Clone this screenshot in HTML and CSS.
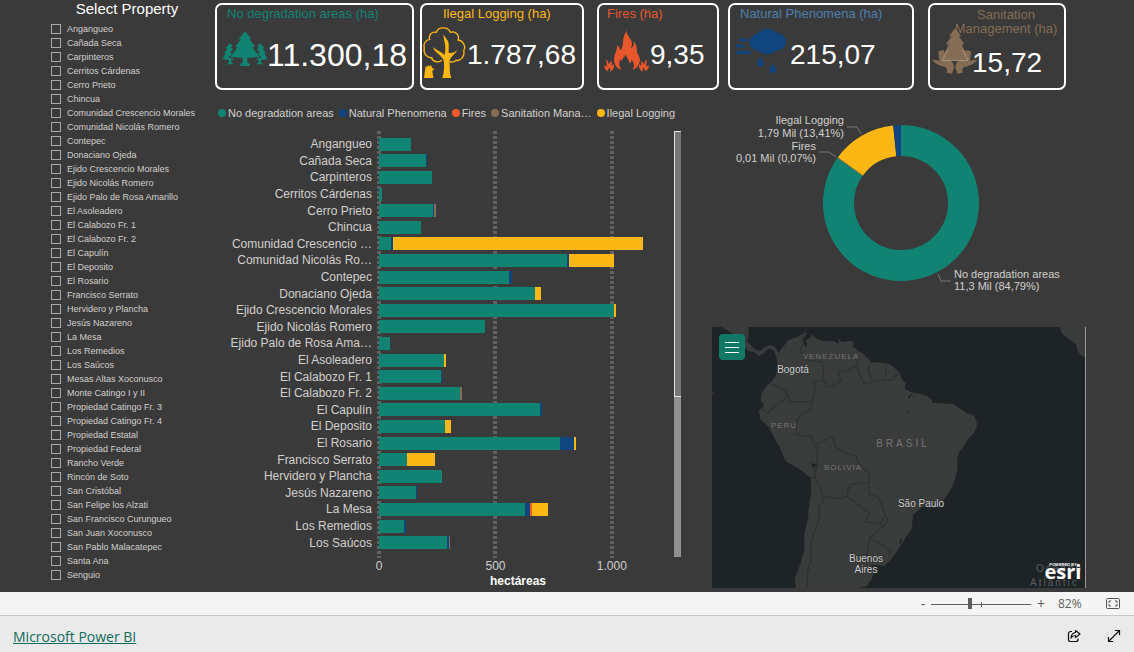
FILE: index.html
```html
<!DOCTYPE html>
<html lang="es">
<head>
<meta charset="utf-8">
<title>Microsoft Power BI</title>
<link rel="stylesheet" href="styles.css">
</head>
<body>
<main class="report">
  <fieldset class="slicer">
    <legend class="slicer-title">Select Property</legend>
    <label class="option"><input type="checkbox">Angangueo</label>
    <label class="option"><input type="checkbox">Cañada Seca</label>
    <label class="option"><input type="checkbox">Carpinteros</label>
    <label class="option"><input type="checkbox">Cerritos Cárdenas</label>
    <label class="option"><input type="checkbox">Cerro Prieto</label>
    <label class="option"><input type="checkbox">Chincua</label>
    <label class="option"><input type="checkbox">Comunidad Crescencio Morales</label>
    <label class="option"><input type="checkbox">Comunidad Nicolás Romero</label>
    <label class="option"><input type="checkbox">Contepec</label>
    <label class="option"><input type="checkbox">Donaciano Ojeda</label>
    <label class="option"><input type="checkbox">Ejido Crescencio Morales</label>
    <label class="option"><input type="checkbox">Ejido Nicolás Romero</label>
    <label class="option"><input type="checkbox">Ejido Palo de Rosa Amarillo</label>
    <label class="option"><input type="checkbox">El Asoleadero</label>
    <label class="option"><input type="checkbox">El Calabozo Fr. 1</label>
    <label class="option"><input type="checkbox">El Calabozo Fr. 2</label>
    <label class="option"><input type="checkbox">El Capulín</label>
    <label class="option"><input type="checkbox">El Deposito</label>
    <label class="option"><input type="checkbox">El Rosario</label>
    <label class="option"><input type="checkbox">Francisco Serrato</label>
    <label class="option"><input type="checkbox">Hervidero y Plancha</label>
    <label class="option"><input type="checkbox">Jesús Nazareno</label>
    <label class="option"><input type="checkbox">La Mesa</label>
    <label class="option"><input type="checkbox">Los Remedios</label>
    <label class="option"><input type="checkbox">Los Saúcos</label>
    <label class="option"><input type="checkbox">Mesas Altas Xoconusco</label>
    <label class="option"><input type="checkbox">Monte Catingo I y II</label>
    <label class="option"><input type="checkbox">Propiedad Catingo Fr. 3</label>
    <label class="option"><input type="checkbox">Propiedad Catingo Fr. 4</label>
    <label class="option"><input type="checkbox">Propiedad Estatal</label>
    <label class="option"><input type="checkbox">Propiedad Federal</label>
    <label class="option"><input type="checkbox">Rancho Verde</label>
    <label class="option"><input type="checkbox">Rincón de Soto</label>
    <label class="option"><input type="checkbox">San Cristóbal</label>
    <label class="option"><input type="checkbox">San Felipe los Alzati</label>
    <label class="option"><input type="checkbox">San Francisco Curungueo</label>
    <label class="option"><input type="checkbox">San Juan Xoconusco</label>
    <label class="option"><input type="checkbox">San Pablo Malacatepec</label>
    <label class="option"><input type="checkbox">Santa Ana</label>
    <label class="option"><input type="checkbox">Senguio</label>
  </fieldset>

  <div class="board">
    <section class="cards">
      <article class="card card-areas">
        <h2 class="card-title">No degradation areas (ha)</h2>
        <div class="card-body">
          <svg class="card-icon" width="46" height="36" viewBox="36 92 138 108" aria-hidden="true">
            <g fill="#118373">
              <path d="M105 93L125 116L118 117L136 139L127 141L149 170L112 172V186Q120 189 121 197H90Q91 189 98 186V172L61 170L83 141L75 139L93 117L86 116Z"/>
              <path id="sideTree" d="M60 128L68 138L62 142L70 146L60 157L68 160L55 171L73 177L64 180V186L72 192H50L57 186V179L37 177L47 160L42 158L52 145L47 143Z"/>
              <use href="#sideTree" transform="translate(210 0) scale(-1 1)"/>
            </g>
          </svg>
          <span class="card-value">11.300,18</span>
        </div>
      </article>
      <article class="card card-logging">
        <h2 class="card-title">Ilegal Logging (ha)</h2>
        <div class="card-body">
          <svg class="card-icon" width="43" height="53" viewBox="23 78 129 159" aria-hidden="true">
            <path fill="none" stroke="#fdb714" stroke-width="4" d="M80 181C68 190 50 184 49 173C34 173 23 160 27 144C23 130 32 119 43 118C39 104 50 94 63 97C68 80 98 78 105 97C121 92 134 106 128 120C146 123 152 142 145 152C150 170 134 184 122 181C116 187 109 187 104 184"/>
            <path fill="#fdb714" d="M81 234H108Q103 222 103 200V182C104 172 118 164 126 150C118 158 108 160 100 158V130C98 118 88 112 84 102C84 118 91 130 90 146L88 166C78 154 64 152 53 141C58 158 76 164 84 178C88 192 87 216 81 234Z"/>
            <path fill="#fdb714" d="M26 234L31 198L35 202L39 194L43 200L47 194L50 203L57 207L51 213L54 234Z"/>
          </svg>
          <span class="card-value">1.787,68</span>
        </div>
      </article>
      <article class="card card-fires">
        <h2 class="card-title">Fires (ha)</h2>
        <div class="card-body">
          <svg class="card-icon" width="45" height="43" viewBox="568 86 134 128" aria-hidden="true">
            <g fill="#e8562c">
              <path d="M636 87C632 100 642 108 648 118C654 130 651 136 648 144C655 140 658 132 657 123C668 134 664 148 668 160C673 168 677 176 674 184C671 196 664 204 653 208C660 196 657 186 650 177C650 184 648 187 644 189C645 178 634 172 633 161C631 170 622 168 622 182L617 176C610 190 615 200 621 208C606 204 597 190 598 176C598 160 607 152 607 134C613 138 616 144 617 150C627 136 623 124 627 110C629 100 634 96 636 87Z"/>
              <path id="spark" d="M573 177C579 180 582 184 581 191C585 187 589 184 589 179C593 186 590 190 592 195L598 190C599 202 594 211 586 213C589 208 587 204 583 201C583 206 578 206 579 212C571 208 568 200 569 194L576 198C577 190 576 184 573 177Z"/>
              <use href="#spark" transform="translate(1270 0) scale(-1 1)"/>
            </g>
          </svg>
          <span class="card-value">9,35</span>
        </div>
      </article>
      <article class="card card-natural">
        <h2 class="card-title">Natural Phenomena (ha)</h2>
        <div class="card-body">
          <svg class="card-icon" width="51" height="45" viewBox="46 83 152 133" aria-hidden="true">
            <g fill="#10457e">
              <circle cx="111" cy="126" r="23"/><ellipse cx="142" cy="110" rx="30" ry="25"/><circle cx="173" cy="124" r="25"/><ellipse cx="142" cy="123" rx="47" ry="33"/><ellipse cx="142" cy="136" rx="32" ry="25"/>
              <path d="M122 169Q132 183 132 189A10 9 0 0 1 112 189Q112 183 122 169ZM159 190Q169 202 169 207A10 9 0 0 1 149 207Q149 202 159 190Z"/>
            </g>
            <path fill="none" stroke="#10457e" stroke-width="9" stroke-linecap="round" d="M62 118H79M52 136H71M52 155H91"/>
          </svg>
          <span class="card-value">215,07</span>
        </div>
      </article>
      <article class="card card-sanitation">
        <h2 class="card-title">Sanitation<br>Management (ha)</h2>
        <div class="card-body">
          <svg class="card-icon" width="45" height="47" viewBox="636 84 136 142" aria-hidden="true">
            <g fill="#846d54">
              <path d="M706 84L724 108L717 110L734 132L726 134L748 182H712V190H700V182H664L686 134L678 132L695 110L688 108Z"/>
              <path id="hand" d="M636 181Q645 178 658 184L655 156Q656 151 660 155Q662 148 666 153Q669 148 673 153L678 178L694 184Q704 192 702 204L696 222L680 219Q684 206 676 202Q652 198 636 181Z"/>
              <use href="#hand" transform="translate(1409 0) scale(-1 1)"/>
            </g>
            <path fill="#3a3a3a" d="M698 184H712L705 198Z"/>
            <path fill="none" stroke="#b5aca0" stroke-width="2" d="M684 150L667 182H745L728 150"/>
          </svg>
          <span class="card-value">15,72</span>
        </div>
      </article>
    </section>

    <div class="visuals">
      <section class="chart">
        <ul class="legend">
          <li><i class="dot areas"></i>No degradation areas</li>
          <li><i class="dot natural"></i>Natural Phenomena</li>
          <li><i class="dot fires"></i>Fires</li>
          <li><i class="dot sanitation"></i>Sanitation Mana…</li>
          <li><i class="dot logging"></i>Ilegal Logging</li>
        </ul>
        <div class="chart-area">
          <ol class="names">
            <li>Angangueo</li><li>Cañada Seca</li><li>Carpinteros</li><li>Cerritos Cárdenas</li><li>Cerro Prieto</li>
            <li>Chincua</li><li>Comunidad Crescencio …</li><li>Comunidad Nicolás Ro…</li><li>Contepec</li><li>Donaciano Ojeda</li>
            <li>Ejido Crescencio Morales</li><li>Ejido Nicolás Romero</li><li>Ejido Palo de Rosa Ama…</li><li>El Asoleadero</li><li>El Calabozo Fr. 1</li>
            <li>El Calabozo Fr. 2</li><li>El Capulín</li><li>El Deposito</li><li>El Rosario</li><li>Francisco Serrato</li>
            <li>Hervidero y Plancha</li><li>Jesús Nazareno</li><li>La Mesa</li><li>Los Remedios</li><li>Los Saúcos</li>
          </ol>
          <div class="plot">
            <div class="gridlines"><i></i><i></i><i></i></div>
            <div class="bar"><i class="areas" style="width:10.9%"></i></div>
            <div class="bar"><i class="areas" style="width:16%"></i><i class="natural" style="width:.3%"></i></div>
            <div class="bar"><i class="areas" style="width:18.2%"></i></div>
            <div class="bar"><i class="areas" style="width:1.1%"></i></div>
            <div class="bar"><i class="areas" style="width:18.4%"></i><i class="natural" style="width:.5%"></i><i class="sanitation" style="width:.6%"></i></div>
            <div class="bar"><i class="areas" style="width:14.6%"></i></div>
            <div class="bar"><i class="areas" style="width:4.2%"></i><i class="natural" style="width:.6%"></i><i class="logging" style="width:85.9%"></i></div>
            <div class="bar"><i class="areas" style="width:64.5%"></i><i class="natural" style="width:.7%"></i><i class="logging" style="width:15.4%"></i></div>
            <div class="bar"><i class="areas" style="width:44.7%"></i><i class="natural" style="width:1.1%"></i></div>
            <div class="bar"><i class="areas" style="width:53.6%"></i><i class="logging" style="width:2.2%"></i></div>
            <div class="bar"><i class="areas" style="width:80.7%"></i><i class="logging" style="width:.7%"></i></div>
            <div class="bar"><i class="areas" style="width:36.4%"></i></div>
            <div class="bar"><i class="areas" style="width:3.9%"></i></div>
            <div class="bar"><i class="areas" style="width:22.3%"></i><i class="logging" style="width:.8%"></i></div>
            <div class="bar"><i class="areas" style="width:21.2%"></i><i class="natural" style="width:.4%"></i></div>
            <div class="bar"><i class="areas" style="width:28%"></i><i class="sanitation" style="width:.4%"></i></div>
            <div class="bar"><i class="areas" style="width:55.3%"></i><i class="natural" style="width:.8%"></i></div>
            <div class="bar"><i class="areas" style="width:22.8%"></i><i class="logging" style="width:2.1%"></i></div>
            <div class="bar"><i class="areas" style="width:62.2%"></i><i class="natural" style="width:4.8%"></i><i class="logging" style="width:.6%"></i></div>
            <div class="bar"><i class="areas" style="width:9.5%"></i><i class="logging" style="width:9.8%"></i></div>
            <div class="bar"><i class="areas" style="width:21.6%"></i></div>
            <div class="bar"><i class="areas" style="width:12.8%"></i><i class="natural" style="width:.4%"></i></div>
            <div class="bar"><i class="areas" style="width:50.3%"></i><i class="natural" style="width:1.6%"></i><i class="fires" style="width:.6%"></i><i class="logging" style="width:5.6%"></i></div>
            <div class="bar"><i class="areas" style="width:8.6%"></i><i class="natural" style="width:.8%"></i></div>
            <div class="bar"><i class="areas" style="width:23.4%"></i><i class="natural" style="width:.6%"></i><i class="sanitation" style="width:.3%"></i></div>
          </div>
          <div class="scroll"><div class="scroll-thumb"></div></div>
          <div class="ticks"><span>0</span><span>500</span><span>1.000</span></div>
          <div class="axis-title">hectáreas</div>
        </div>
      </section>

      <div class="side">
        <svg class="donut" viewBox="0 0 374 224" role="img" aria-label="Donut">
          <g fill="none" stroke-width="31" transform="rotate(-90 189 113)">
            <circle cx="189" cy="113" r="62.5" pathLength="100" stroke="#118373" stroke-dasharray="84.8 100"/>
            <circle cx="189" cy="113" r="62.5" pathLength="100" stroke="#846d54" stroke-dasharray=".2 100" stroke-dashoffset="-84.79"/>
            <circle cx="189" cy="113" r="62.5" pathLength="100" stroke="#fdb714" stroke-dasharray="13.42 100" stroke-dashoffset="-84.97"/>
            <circle cx="189" cy="113" r="62.5" pathLength="100" stroke="#10457e" stroke-dasharray="1.61 100" stroke-dashoffset="-98.39"/>
          </g>
          <path fill="none" stroke="#777" d="M135 37H145L149 44M107 62H117L124 67M226 184L229 191H239"/>
          <g class="donut-label">
            <text x="132" y="34" text-anchor="end">Ilegal Logging</text>
            <text x="132" y="47" text-anchor="end">1,79 Mil (13,41%)</text>
            <text x="104" y="60" text-anchor="end">Fires</text>
            <text x="104" y="72" text-anchor="end">0,01 Mil (0,07%)</text>
            <text x="242" y="188">No degradation areas</text>
            <text x="242" y="200">11,3 Mil (84,79%)</text>
          </g>
        </svg>
        <div class="map">
          <svg class="map-canvas" viewBox="0 0 373 261" role="img" aria-label="Mapa">
            <g transform="scale(.33333) translate(-21 -21)">
              <path fill="#3a3b3b" d="M50 21H130L131 48L126 64L145 83L160 92L170 90L178 82L197 75L212 83L220 98L238 76L250 60L280 50L302 36L305 42L294 55L296 70L302 82L306 72L301 62L318 50L322 40L326 50L350 62L385 64L400 70L402 58L410 66L440 62L448 72L440 76L460 92L480 106L498 127L540 128L560 136L582 156L590 176L602 190L600 206L614 214L626 218L640 220L665 228L680 238V248L745 252L785 280L806 286L815 305V320L808 338L785 362L775 382L762 397L758 410L757 450L746 490L730 520L712 544L650 562L624 585L620 626L600 655L585 680L560 716L538 738L500 735L478 728L498 736L510 750L500 778L486 798L455 806H273L269 776L285 735L298 690V640L308 600L312 560L319 515L317 475L290 452L240 422L232 400L215 366L190 320L166 298L162 272L177 256L167 240L170 220L182 200L200 184L214 165L217 130L213 106L206 90L190 86L176 100L162 108L148 97L128 92L114 74L100 48L80 38Z"/>
              <path fill="#3a3b3b" d="M1066 21H1140V112L1128 106L1116 90L1114 72L1096 60L1080 48L1068 38ZM21 216L28 220L24 224Z"/>
              <path fill="#1e2326" d="M602 268L612 278L606 277ZM584 660L592 656L586 674ZM318 430L330 432L341 440L328 440L324 444ZM626 218L612 236L610 228Z"/>
              <path fill="none" stroke="#2f3233" stroke-width="4" stroke-linejoin="round" d="M296 70L286 92L300 120L350 126L356 150L355 182L325 188L330 210L322 245L312 246L258 244L240 212L200 192M240 212L246 228L230 246L208 256L190 280L176 270M322 245L318 268L286 284L274 306L274 342L300 350L318 346L322 366L338 372L383 350L390 380L420 398L455 410L460 430L486 456L495 470L490 488L440 492L428 510L426 530L404 536L362 530L356 540L344 500L330 474L336 430L338 372M322 366L338 396L334 440L328 472L317 475M356 182L366 200L390 196L408 180L398 154L430 150L456 136L462 108M456 136L470 180L480 192L520 182L565 180L582 156M498 127L488 150L500 176M540 128L544 150L540 178M490 488L492 525L520 530L530 556L540 584L528 612L480 606L494 580L428 530M540 584L550 602L520 632L494 656L486 700L490 730M494 656L530 672L556 695L550 712M356 540L342 560L344 590L326 640L316 680L318 720L306 760L308 806"/>
            </g>
            <g class="country" fill="#737575">
              <text x="119" y="32" text-anchor="middle">VENEZUELA</text>
              <text x="72" y="101" text-anchor="middle">PERÚ</text>
              <text x="131" y="143" text-anchor="middle">BOLIVIA</text>
              <text class="wide" x="191" y="120" text-anchor="middle">BRASIL</text>
              <text class="ocean" x="324" y="245">Océano</text>
              <text class="ocean" x="318" y="259">Atlántic</text>
            </g>
            <g class="city">
              <text x="81" y="46" text-anchor="middle">Bogotá</text>
              <text x="209" y="180" text-anchor="middle">São Paulo</text>
              <text x="154" y="235" text-anchor="middle">Buenos</text>
              <text x="154" y="246" text-anchor="middle">Aires</text>
            </g>
            <text class="esri-small" x="351" y="239" text-anchor="middle">POWERED BY</text>
            <text class="esri" x="351" y="252" text-anchor="middle">esri</text>
          </svg>
          <button class="map-menu" aria-label="Menú"><span></span><span></span><span></span></button>
        </div>
      </div>
    </div>
  </div>
</main>

<div class="zoombar">
  <button class="zoom-step" aria-label="Alejar">-</button>
  <input class="zoom-range" type="range" min="0" max="100" value="39" aria-label="Zoom">
  <button class="zoom-step" aria-label="Acercar">+</button>
  <span class="zoom-value">82%</span>
  <button class="icon-button" aria-label="Ajustar a la página">
    <svg width="14" height="11" viewBox="0 0 14 11" fill="none" stroke="#555"><rect x=".5" y=".5" width="13" height="10" rx="1"/><path d="M3 5V3H5M9 3H11V5M11 6V8H9M5 8H3V6"/></svg>
  </button>
</div>
<footer class="footer">
  <a class="brand" href="#">Microsoft Power BI</a>
  <button class="icon-button" aria-label="Compartir">
    <svg width="14" height="14" viewBox="0 0 14 14" fill="none" stroke="#111" stroke-width="1.200" stroke-linejoin="round"><path d="M5 2.500H3.500A2 2 0 0 0 1.500 4.500V10.500A2 2 0 0 0 3.500 12.500H9A2 2 0 0 0 11 10.500V9.500"/><path d="M8.500 1.500L13 5L8.500 8.500V6.500Q6 6.500 4 9Q4.500 4 8.500 3.500Z"/></svg>
  </button>
  <button class="icon-button" aria-label="Pantalla completa">
    <svg width="14" height="14" viewBox="0 0 14 14" fill="none" stroke="#111" stroke-width="1.200"><path d="M1.500 12.500L12.500 1.500M8 1.500H12.500V6M1.500 8V12.500H6"/></svg>
  </button>
</footer>
</body>
</html>
```
FILE: styles.css
```css
* { box-sizing: border-box; }

body {
  margin: 0;
  background: #eaeaea;
  font-family: "Liberation Sans", Arial, sans-serif;
  color: #d2d0ce;
}

button {
  padding: 0;
  border: 0;
  background: none;
  color: inherit;
  font: inherit;
}

ul, ol { margin: 0; padding: 0; list-style: none; }
svg { display: block; }

.areas { background: #118373; }
.natural { background: #10457e; }
.fires { background: #f1592a; }
.sanitation { background: #846d54; }
.logging { background: #fdb714; }

.report {
  display: grid;
  grid-template-columns: 215px minmax(0, 1fr);
  min-height: 592px;
  background: #3a3a3a;
}

/* Property slicer */
.slicer {
  margin: 0;
  padding: 0 0 0 51px;
  border: 0;
  min-width: 0;
}
.slicer-title {
  width: 152px;
  padding: 0 12px 0 0;
  height: 22px;
  line-height: 18px;
  font-size: 15px;
  text-align: center;
  color: #fff;
}
.option {
  display: flex;
  align-items: center;
  gap: 6px;
  height: 14px;
  font-size: 9px;
  white-space: nowrap;
}
.option input {
  appearance: none;
  width: 10px;
  height: 10px;
  margin: 0;
  border: 1px solid #aaa9a6;
}

/* Cards */
.board { padding: 3px 48px 3px 0; }
.cards {
  display: grid;
  grid-template-columns: 199fr 170fr 135fr 195fr 152fr;
  padding-right: 20px;
}
.card {
  height: 87px;
  border: 2px solid #fff;
  border-radius: 7px;
}
.card-title {
  margin: 0;
  height: 17px;
  line-height: 17px;
  font-size: 13px;
  font-weight: 400;
  white-space: nowrap;
}
.card-body {
  display: flex;
  align-items: center;
  height: 65px;
}
.card-icon { flex: none; margin-bottom: 8px; }
.card-value {
  font-size: 28px;
  line-height: 32px;
  color: #fff;
}
.card-areas .card-title { padding-left: 10px; color: #118373; }
.card-areas .card-body { padding-left: 5px; }
.card-areas .card-icon { margin-bottom: 12px; }
.card-areas .card-value { margin-left: -1px; font-size: 32px; }

.card-logging { margin-left: 6px; }
.card-logging .card-title { padding-left: 21px; color: #fdb714; }
.card-logging .card-body { padding-left: 1px; gap: 1px; }
.card-logging .card-icon { margin-bottom: 4px; }

.card-fires { margin-left: 13px; }
.card-fires .card-title { padding-left: 8px; color: #e8562c; }
.card-fires .card-body { padding-left: 5px; gap: 1px; }

.card-natural { margin-left: 9px; }
.card-natural .card-title { padding-left: 10px; color: #4b7fb0; }
.card-natural .card-body { padding-left: 5px; gap: 4px; }

.card-sanitation { margin-left: 14px; }
.card-sanitation .card-title {
  height: 31px;
  padding: 3px 4px 0 22px;
  line-height: 14px;
  text-align: center;
  color: #846d54;
}
.card-sanitation .card-body { height: 51px; padding-left: 2px; }
.card-sanitation .card-icon { margin: -20px 0 0; }
.card-sanitation .card-value { margin: 3px 0 0 -5px; }

/* Lower area */
.visuals {
  display: grid;
  grid-template-columns: minmax(0, 1fr) 374px;
  gap: 31px;
}
.legend {
  display: flex;
  align-items: center;
  gap: 5px;
  height: 40px;
  padding: 6px 0 0 3px;
  font-size: 11px;
  white-space: nowrap;
}
.legend li { display: flex; align-items: center; gap: 2px; }
.dot { width: 8px; height: 8px; border-radius: 50%; }

.chart-area {
  display: grid;
  grid-template-columns: 157px minmax(0, 1fr) 7px;
  grid-template-rows: 428px 17px 13px;
}
.names, .plot {
  display: grid;
  grid-template-rows: repeat(25, 1fr);
  align-items: center;
  padding: 6px 0 7px;
}
.names {
  font-size: 12px;
  line-height: 16px;
  text-align: right;
  white-space: nowrap;
}
.plot { position: relative; margin: 0 4px 0 7px; }
.bar { position: relative; display: flex; height: 13px; }
.gridlines {
  position: absolute;
  inset: 0 20% 0 0;
  display: flex;
  justify-content: space-between;
}
.gridlines i {
  width: 4px;
  margin: 0 -2px;
  background: radial-gradient(circle, #616161 2px, transparent 2px) 0 0 / 4px 5px;
}
.scroll { margin: 1px 0; background: #919191; }
.scroll-thumb {
  height: 266px;
  border: 1px solid #e6e6e6;
  border-right: 0;
  background: #777;
}
.ticks {
  grid-column: 2;
  display: grid;
  grid-template-columns: repeat(3, 1fr);
  margin: 0 4px 0 -51px;
  font-size: 12px;
  line-height: 17px;
  text-align: center;
}
.axis-title {
  grid-column: 2;
  padding-right: 10px;
  font-size: 12px;
  line-height: 13px;
  font-weight: 700;
  text-align: center;
  color: #fff;
}

.donut { width: 100%; }
.donut-label { font-size: 11px; fill: #d2d0ce; }
.side { display: flex; flex-direction: column; }
.map {
  position: relative;
  margin-top: 13px;
  border-right: 1px solid #999;
  background: #1e2326;
}
.map-canvas { width: 100%; }
.map-menu {
  position: absolute;
  top: 7px;
  left: 7px;
  display: grid;
  align-content: center;
  justify-content: center;
  gap: 4px;
  width: 26px;
  height: 26px;
  border-radius: 4px;
  background: #117865;
}
.map-menu span { width: 14px; height: 1px; background: #fff; }
.country { font-size: 8px; letter-spacing: 1px; }
.country .wide { font-size: 10px; letter-spacing: 3px; }
.country .ocean { font-size: 10px; letter-spacing: 2px; fill: #5a5d5e; }
.city {
  font-size: 10px;
  fill: #d0d0d0;
  stroke: #2a2c2d;
  stroke-width: 1px;
  paint-order: stroke;
}
.esri {
  font-family: "Open Sans", sans-serif;
  font-size: 20px;
  font-weight: 700;
  fill: #fff;
}
.esri-small { font-size: 4px; font-weight: 700; font-style: italic; fill: #fff; }

/* Zoom bar and footer */
.zoombar {
  display: flex;
  align-items: center;
  justify-content: flex-end;
  height: 24px;
  padding-right: 14px;
  border-bottom: 1px solid #c8c8c8;
  background: #f5f5f5;
  font-family: "Open Sans", sans-serif;
  font-size: 12px;
  color: #605e5c;
}
.zoom-step { width: 12px; font-size: 14px; line-height: 20px; text-align: center; }
.zoom-range {
  appearance: none;
  width: 100px;
  height: 12px;
  margin: 0 4px 0 2px;
  background:
    linear-gradient(#605e5c, #605e5c) 50px 4px / 1px 5px no-repeat,
    linear-gradient(#605e5c, #605e5c) 0 6px / 100px 1px no-repeat;
}
.zoom-range::-webkit-slider-thumb {
  appearance: none;
  width: 4px;
  height: 11px;
  background: #605e5c;
}
.zoom-value { width: 24px; margin: 0 24px 0 11px; }

.footer {
  display: flex;
  align-items: center;
  gap: 26px;
  min-height: 36px;
  padding: 4px 13px 0;
}
.brand {
  margin-right: auto;
  font-family: "Open Sans", sans-serif;
  font-size: 14px;
  color: #0f6b5c;
}
```
